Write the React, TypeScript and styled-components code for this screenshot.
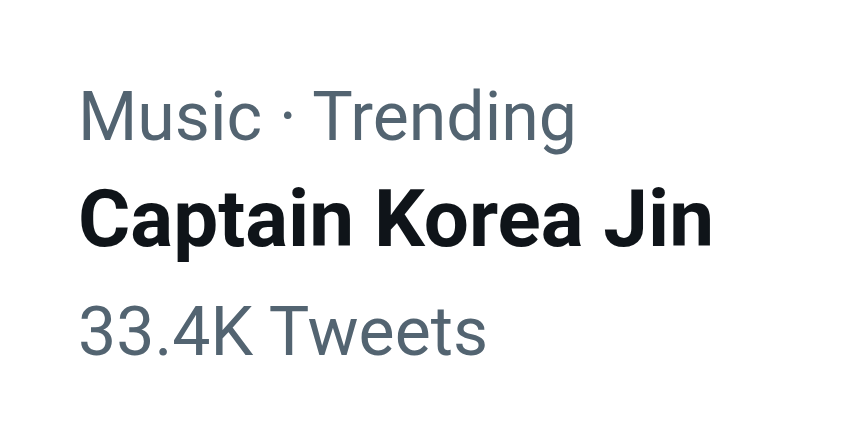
import React from "react";
import styled, { createGlobalStyle } from "styled-components";

const Global = createGlobalStyle`
  html, body { margin: 0; padding: 0; background: #ffffff; }
  body { font-family: Roboto, "Noto Sans", sans-serif; }
`;

const Trend = styled.div`
  display: flex;
  flex-direction: column;
  padding: 77px 0 0 78px;
`;

const Meta = styled.div`
  color: #536471;
  font-size: 68px;
  line-height: 80px;
  font-weight: 400;
  white-space: nowrap;
`;

const Title = styled.div`
  color: #0f1419;
  font-size: 80px;
  line-height: 100px;
  font-weight: 700;
  margin-top: 12px;
  white-space: nowrap;
`;

const Count = styled(Meta)`
  margin-top: 23px;
`;

export default function App() {
  return (
    <>
      <Global />
      <Trend>
        <Meta>Music · Trending</Meta>
        <Title>Captain Korea Jin</Title>
        <Count>33.4K Tweets</Count>
      </Trend>
    </>
  );
}
